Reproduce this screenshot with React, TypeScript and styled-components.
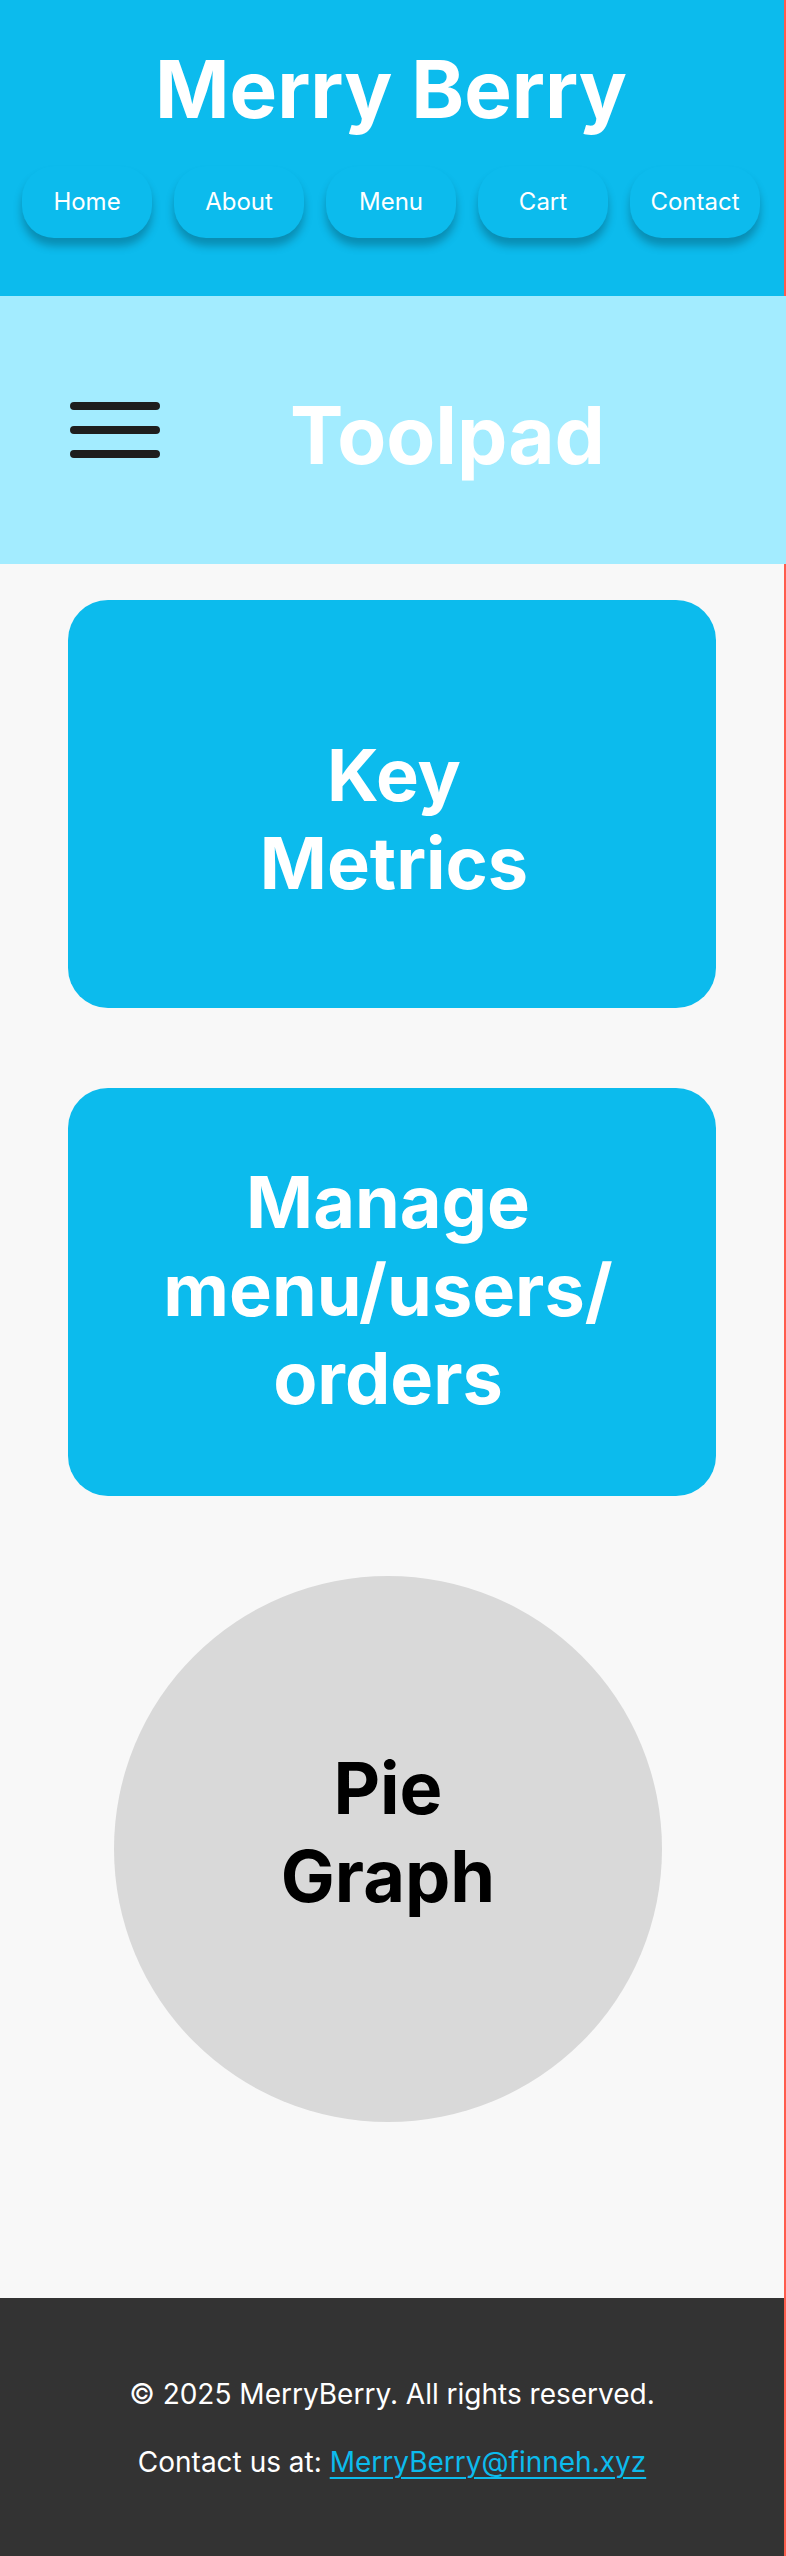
import React from 'react';
import styled, { createGlobalStyle } from 'styled-components';

const colors = {
  brand: '#0cbbed',
  brandLight: '#a3ecff',
  page: '#f8f8f8',
  dark: '#333333',
  edge: '#ff5c4d',
  ink: '#1e1e1e',
};

const GlobalStyle = createGlobalStyle`
  *, *::before, *::after { box-sizing: border-box; }
  body {
    margin: 0;
    font-family: Inter, 'Liberation Sans', sans-serif;
  }
  h1, h2, p { margin: 0; }
`;

/* The edge colour shows as a thin strip along the right side. */
const Page = styled.div`
  padding-right: 2px;
  background: ${colors.edge};
`;

const Header = styled.header`
  display: flex;
  flex-direction: column;
  align-items: center;
  gap: 28px;
  padding: 40px 24px 58px 22px;
  background: ${colors.brand};
`;

const Title = styled.h1`
  font-size: 80px;
  line-height: 98px;
  font-weight: 700;
  color: #fff;
`;

const Nav = styled.nav`
  display: flex;
  justify-content: center;
  gap: 22px;
`;

const NavLink = styled.a`
  display: flex;
  align-items: center;
  justify-content: center;
  width: 130px;
  height: 72px;
  border-radius: 32px;
  background: ${colors.brand};
  box-shadow: 0 8px 8px rgba(0, 0, 0, 0.25);
  color: #fff;
  font-size: 24px;
  line-height: 30px;
  font-weight: 400;
  text-decoration: none;
`;

/* Runs over the edge strip to the full window width. */
const Toolbar = styled.div`
  display: flex;
  align-items: center;
  gap: 124px;
  margin-right: -2px;
  padding: 80px 64px;
  background: ${colors.brandLight};
`;

const MenuButton = styled.button`
  display: flex;
  padding: 6px;
  border: 0;
  background: none;
  cursor: pointer;
`;

const ToolbarTitle = styled.h2`
  padding-top: 10px;
  font-size: 80px;
  line-height: 98px;
  font-weight: 700;
  color: #fff;
`;

const Main = styled.main`
  display: flex;
  flex-direction: column;
  align-items: center;
  gap: 80px;
  padding: 36px 68px 176px;
  background: ${colors.page};
`;

const Card = styled.section<{ $padding: string }>`
  display: flex;
  align-items: center;
  justify-content: center;
  width: 100%;
  min-height: 408px;
  padding: ${(p) => p.$padding};
  border-radius: 40px;
  background: ${colors.brand};
  color: #fff;
`;

const Chart = styled.section`
  display: flex;
  align-items: center;
  justify-content: center;
  width: 100%;
  max-width: 548px;
  aspect-ratio: 548 / 546;
  margin-right: 8px;
  padding-bottom: 34px;
  border-radius: 50%;
  background: #d9d9d9;
  color: #000;
`;

const Heading = styled.h2`
  font-size: 72px;
  line-height: 88px;
  font-weight: 700;
  text-align: center;
`;

const Footer = styled.footer`
  display: flex;
  flex-direction: column;
  align-items: center;
  gap: 34px;
  padding: 79px 24px 77px;
  background: ${colors.dark};
  color: #fff;
  font-size: 28px;
  line-height: 34px;
  font-weight: 400;
`;

const MailLink = styled.a`
  color: ${colors.brand};
  text-decoration: underline;
  text-decoration-thickness: 2px;
  text-underline-offset: 5px;
`;

const navItems = ['Home', 'About', 'Menu', 'Cart', 'Contact'];

export default function App() {
  return (
    <>
      <GlobalStyle />
      <Page>
        <Header>
          <Title>Merry Berry</Title>
          <Nav aria-label="Main">
            {navItems.map((item) => (
              <NavLink key={item} href={`#${item.toLowerCase()}`}>
                {item}
              </NavLink>
            ))}
          </Nav>
        </Header>
        <Toolbar>
          <MenuButton type="button" aria-label="Open menu">
            <svg width="90" height="56" viewBox="0 0 90 56" stroke={colors.ink} strokeWidth="8" strokeLinecap="round">
              <path d="M4 4H86M4 28H86M4 52H86" />
            </svg>
          </MenuButton>
          <ToolbarTitle>Toolpad</ToolbarTitle>
        </Toolbar>
        <Main>
          <Card $padding="30px 0 0 4px">
            <Heading>
              Key
              <br />
              Metrics
            </Heading>
          </Card>
          <Card $padding="0 8px 4px 0">
            <Heading>
              Manage
              <br />
              menu/users/
              <br />
              orders
            </Heading>
          </Card>
          <Chart>
            <Heading>
              Pie
              <br />
              Graph
            </Heading>
          </Chart>
        </Main>
        <Footer>
          <p>© 2025 MerryBerry. All rights reserved.</p>
          <p>
            Contact us at: <MailLink href="mailto:MerryBerry@finneh.xyz">MerryBerry@finneh.xyz</MailLink>
          </p>
        </Footer>
      </Page>
    </>
  );
}
